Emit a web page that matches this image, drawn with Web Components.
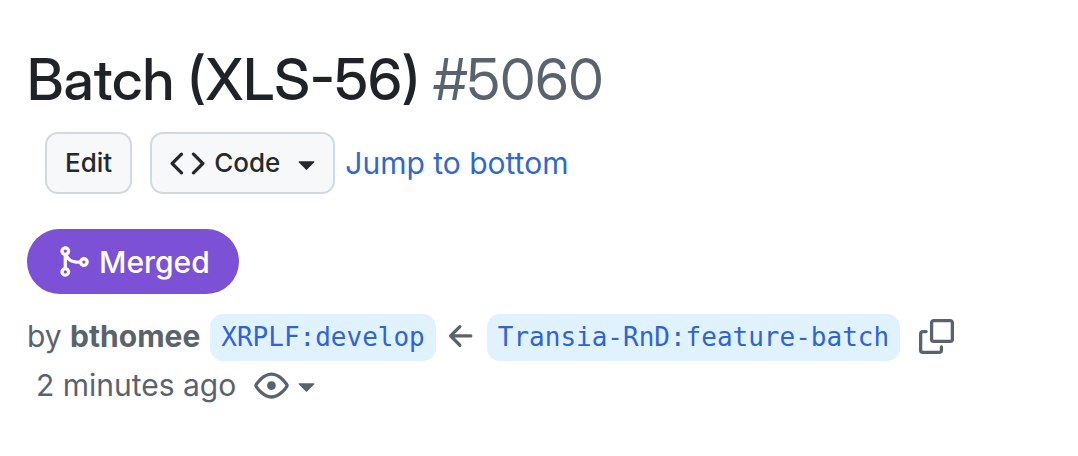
<!DOCTYPE html>
<html lang="en">
<head>
<meta charset="utf-8">
<meta name="viewport" content="width=device-width, initial-scale=1">
<title>Batch (XLS-56) #5060</title>
<style>
  body { margin: 0; background: #fff; color: #1f2328; font-family: Inter, "Liberation Sans", sans-serif; }
</style>
</head>
<body>
<pr-header>
  <pr-title slot="title" number="#5060">Batch (XLS-56)</pr-title>
  <pr-button slot="actions">Edit</pr-button>
  <pr-button slot="actions" icon="code" caret>Code</pr-button>
  <pr-link slot="actions" href="#bottom">Jump to bottom</pr-link>
  <pr-state slot="state">Merged</pr-state>
  <pr-byline slot="meta" author="bthomee" base="XRPLF:develop" head="Transia-RnD:feature-batch"></pr-byline>
  <pr-time slot="meta">2 minutes ago</pr-time>
</pr-header>
<script>
const ICONS = {
  code: 'm11.28 3.22 4.25 4.25a.75.75 0 0 1 0 1.06l-4.25 4.25a.749.749 0 0 1-1.275-.326.749.749 0 0 1 .215-.734L13.94 8l-3.72-3.72a.749.749 0 0 1 .326-1.275.749.749 0 0 1 .734.215Zm-6.56 0a.751.751 0 0 1 1.042.018.751.751 0 0 1 .018 1.042L2.06 8l3.72 3.72a.749.749 0 0 1-.326 1.275.749.749 0 0 1-.734-.215L.47 8.53a.75.75 0 0 1 0-1.06Z',
  caret: 'm4.427 7.427 3.396 3.396a.25.25 0 0 0 .354 0l3.396-3.396A.25.25 0 0 0 11.396 7H4.604a.25.25 0 0 0-.177.427Z',
  merge: 'M5.45 5.154A4.25 4.25 0 0 0 9.25 7.5h1.378a2.251 2.251 0 1 1 0 1.5H9.25A5.734 5.734 0 0 1 5 7.123v3.505a2.25 2.25 0 1 1-1.5 0V5.372a2.25 2.25 0 1 1 1.95-.218ZM4.25 13.5a.75.75 0 1 0 0-1.5.75.75 0 0 0 0 1.5Zm8.5-4.5a.75.75 0 1 0 0-1.5.75.75 0 0 0 0 1.5ZM5 3.25a.75.75 0 1 0 0 .005V3.25Z',
  arrow: 'M7.78 12.53a.75.75 0 0 1-1.06 0L2.47 8.28a.75.75 0 0 1 0-1.06l4.25-4.25a.751.751 0 0 1 1.042.018.751.751 0 0 1 .018 1.042L4.81 7h7.44a.75.75 0 0 1 0 1.5H4.81l2.97 2.97a.75.75 0 0 1 0 1.06Z',
  eye: 'M8 2c1.981 0 3.671.992 4.933 2.078 1.27 1.091 2.187 2.345 2.637 3.023a1.62 1.62 0 0 1 0 1.798c-.45.678-1.367 1.932-2.637 3.023C11.67 13.008 9.981 14 8 14c-1.981 0-3.671-.992-4.933-2.078C1.797 10.83.88 9.576.43 8.898a1.62 1.62 0 0 1 0-1.798c.45-.677 1.367-1.931 2.637-3.022C4.33 2.992 6.019 2 8 2ZM1.679 7.932a.12.12 0 0 0 0 .136c.411.622 1.241 1.75 2.366 2.717C5.176 11.758 6.527 12.5 8 12.5c1.473 0 2.825-.742 3.955-1.715 1.124-.967 1.954-2.096 2.366-2.717a.12.12 0 0 0 0-.136c-.412-.621-1.242-1.75-2.366-2.717C10.824 4.242 9.473 3.5 8 3.5c-1.473 0-2.825.742-3.955 1.715-1.124.967-1.954 2.096-2.366 2.717ZM8 10a2 2 0 1 1-.001-3.999A2 2 0 0 1 8 10Z',
  copy: 'M0 6.75C0 5.784.784 5 1.75 5h1.5a.75.75 0 0 1 0 1.5h-1.5a.25.25 0 0 0-.25.25v7.5c0 .138.112.25.25.25h7.5a.25.25 0 0 0 .25-.25v-1.5a.75.75 0 0 1 1.5 0v1.5A1.75 1.75 0 0 1 9.25 16h-7.5A1.75 1.75 0 0 1 0 14.25ZM5 1.75C5 .784 5.784 0 6.75 0h7.5C15.216 0 16 .784 16 1.75v7.5A1.75 1.75 0 0 1 14.25 11h-7.5A1.75 1.75 0 0 1 5 9.25Zm1.75-.25a.25.25 0 0 0-.25.25v7.5c0 .138.112.25.25.25h7.5a.25.25 0 0 0 .25-.25v-7.5a.25.25 0 0 0-.25-.25Z'
};

function define(name, render) {
  customElements.define(name, class extends HTMLElement {
    constructor() {
      super();
      this.attachShadow({ mode: 'open' });
    }
    connectedCallback() {
      this.shadowRoot.innerHTML = render(this);
    }
  });
}

define('pr-icon', el => `
  <style>
    :host { display: block; flex: none; width: 35px; height: 35px; }
    svg { display: block; width: 100%; height: 100%; fill: currentColor; }
  </style>
  <svg viewBox="0 0 16 16" aria-hidden="true"><path d="${ICONS[el.getAttribute('name')]}"/></svg>`);

define('pr-header', () => `
  <style>
    :host { display: block; padding: 44px 27px; }
    .actions { display: flex; flex-wrap: wrap; align-items: center; gap: 18px; padding: 16px 18px 0; }
    .state { display: flex; padding-top: 35px; }
    .meta { display: flex; flex-direction: column; padding-top: 18px; color: #59636e; }
  </style>
  <header>
    <slot name="title"></slot>
    <div class="actions"><slot name="actions"></slot></div>
    <div class="state"><slot name="state"></slot></div>
    <div class="meta"><slot name="meta"></slot></div>
  </header>`);

define('pr-title', el => `
  <style>
    :host { display: block; }
    h1 { margin: 0; font-family: "Inter Display", Inter, "Liberation Sans", sans-serif; font-size: 57px; line-height: 72px; font-weight: 500; }
    span { font-weight: 400; color: #59636e; }
  </style>
  <h1><slot></slot> <span>${el.getAttribute('number')}</span></h1>`);

define('pr-button', el => `
  <style>
    :host { display: block; }
    button {
      display: flex; align-items: center; height: 62px; padding: 0 18px;
      border: 2px solid #d1d9e0; border-radius: 13px; background: #f6f8fa;
      color: #25292e; font: 500 26px/40px Inter, "Liberation Sans", sans-serif;
    }
    .lead { margin-right: 9px; }
    .caret { margin: 0 -9px 0 9px; }
  </style>
  <button type="button">
    ${el.hasAttribute('icon') ? `<pr-icon class="lead" name="${el.getAttribute('icon')}"></pr-icon>` : ''}
    <slot></slot>
    ${el.hasAttribute('caret') ? '<pr-icon class="caret" name="caret"></pr-icon>' : ''}
  </button>`);

define('pr-link', el => `
  <style>
    :host { display: block; margin-left: -8px; }
    a { color: #3367cc; text-decoration: none; font-size: 30px; line-height: 44px; }
  </style>
  <a href="${el.getAttribute('href')}"><slot></slot></a>`);

define('pr-state', () => `
  <style>
    :host {
      display: flex; align-items: center; gap: 8px; height: 65px; padding: 0 29px;
      border-radius: 33px; background: #7c51d6; color: #fff;
      font-size: 30px; line-height: 44px; font-weight: 500;
    }
  </style>
  <pr-icon name="merge"></pr-icon><span><slot></slot></span>`);

define('pr-branch', () => `
  <style>
    :host { display: block; margin-top: 2px; }
    a {
      display: block; padding: 0 11px; border-radius: 13px; background: #e0f2fe;
      color: #3064d0; text-decoration: none;
      font: 26px/47px "DejaVu Sans Mono", "Liberation Mono", monospace;
    }
  </style>
  <a href="#branch"><slot></slot></a>`);

define('pr-byline', el => `
  <style>
    :host { display: flex; flex-wrap: wrap; align-items: center; font-size: 30px; line-height: 49px; }
    .author { color: inherit; font-weight: 700; text-decoration: none; }
    .base { margin-left: 10px; }
    .arrow { margin: 0 8px; }
    button { margin: 0 0 0 19px; padding: 0; border: 0; background: none; color: inherit; }
  </style>
  <span>by <a class="author" href="#author">${el.getAttribute('author')}</a></span>
  <pr-branch class="base">${el.getAttribute('base')}</pr-branch>
  <pr-icon class="arrow" name="arrow"></pr-icon>
  <pr-branch>${el.getAttribute('head')}</pr-branch>
  <button type="button" aria-label="Copy branch name"><pr-icon name="copy"></pr-icon></button>`);

define('pr-time', () => `
  <style>
    :host { display: flex; align-items: center; gap: 18px; padding-left: 9px; font-size: 30px; line-height: 49px; }
    button { display: flex; align-items: center; padding: 0; border: 0; background: none; color: inherit; }
  </style>
  <span><slot></slot></span>
  <button type="button" aria-label="Watch options"><pr-icon name="eye"></pr-icon><pr-icon name="caret"></pr-icon></button>`);
</script>
</body>
</html>
